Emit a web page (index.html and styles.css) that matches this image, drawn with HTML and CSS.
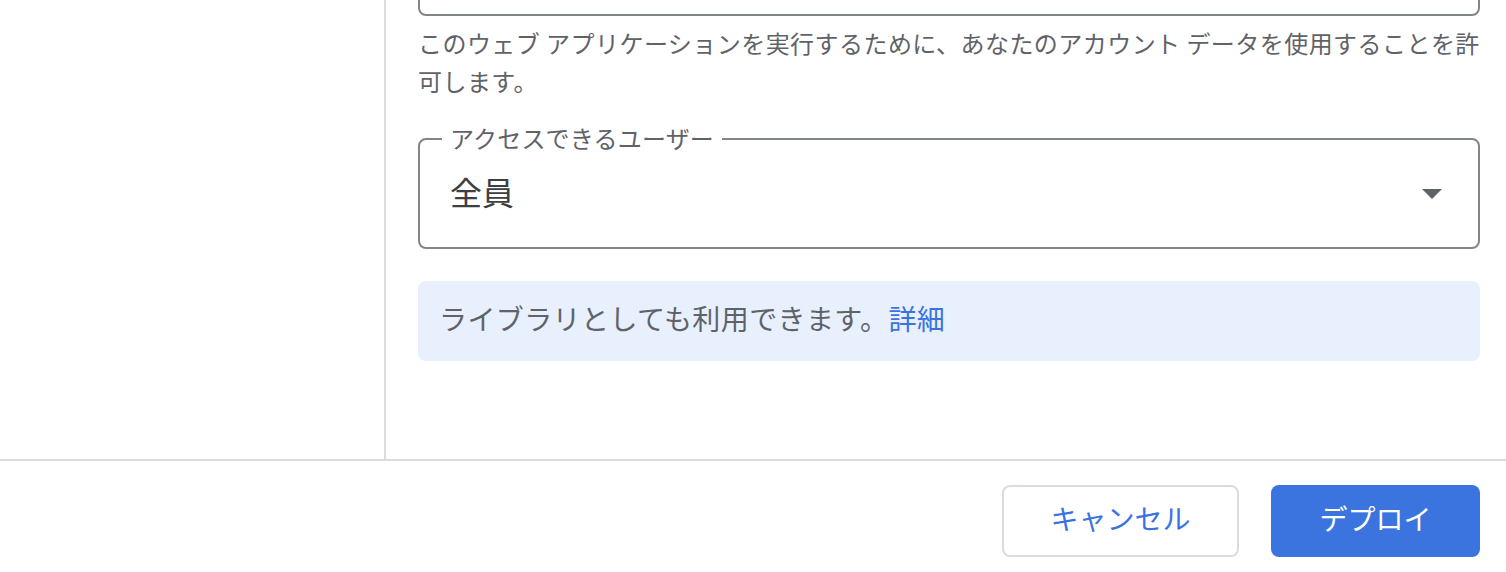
FILE: index.html
```html
<!DOCTYPE html>
<html lang="ja">
<head>
<meta charset="utf-8">
<title>デプロイ</title>
<link rel="stylesheet" href="styles.css">
</head>
<body>
<div class="dialog">
  <div class="main">
    <aside class="sidebar"></aside>
    <section class="content">
      <div class="field-top"></div>
      <p class="helper">このウェブ アプリケーションを実行するために、あなたのアカウント データを使用することを許可します。</p>
      <div class="select">
        <span class="select-label">アクセスできるユーザー</span>
        <span class="select-value">全員</span>
        <span class="select-arrow"></span>
      </div>
      <div class="info">ライブラリとしても利用できます。<a class="info-link" href="#">詳細</a></div>
    </section>
  </div>
  <footer class="footer">
    <button class="btn btn-cancel" type="button">キャンセル</button>
    <button class="btn btn-deploy" type="button">デプロイ</button>
  </footer>
</div>
</body>
</html>
```

FILE: styles.css
```css
* { box-sizing: border-box; }
html, body {
  margin: 0;
  padding: 0;
  background: #ffffff;
  font-family: "Noto Sans CJK JP", "Noto Sans", sans-serif;
}
.dialog {
  width: 1506px;
  height: 572px;
  display: flex;
  flex-direction: column;
  overflow: hidden;
}
.main {
  display: flex;
  height: 461px;
  border-bottom: 2px solid #dadce0;
}
.sidebar {
  width: 386px;
  flex: none;
  border-right: 2px solid #dadce0;
}
.content {
  flex: 1;
  padding: 0 26px 0 32px;
  overflow: hidden;
}
.field-top {
  height: 56px;
  margin-top: -40px;
  border: 2px solid #80868b;
  border-radius: 8px;
}
.helper {
  margin: 8px 0 0 0;
  font-size: 24px;
  line-height: 38px;
  color: #5f6368;
  letter-spacing: 0.45px;
}
.select {
  position: relative;
  margin-top: 38px;
  height: 111px;
  border: 2px solid #80868b;
  border-radius: 8px;
  display: flex;
  align-items: center;
  padding: 0 36px 0 30px;
}
.select-label {
  position: absolute;
  left: 22px;
  top: -18px;
  padding: 0 8px;
  background: #ffffff;
  font-size: 24px;
  line-height: 32px;
  color: #5f6368;
  letter-spacing: 0.2px;
}
.select-value {
  flex: 1;
  font-size: 32px;
  line-height: 40px;
  color: #3c4043;
  margin-top: -6px;
}
.select-arrow {
  width: 0;
  height: 0;
  border-left: 10px solid transparent;
  border-right: 10px solid transparent;
  border-top: 10px solid #5f6368;
}
.info {
  margin-top: 32px;
  height: 80px;
  border-radius: 8px;
  background: #e8f0fe;
  display: flex;
  align-items: center;
  padding: 0 0 6px 21px;
  font-size: 28px;
  color: #5f6368;
  letter-spacing: 0.4px;
}
.info-link {
  color: #3a73e0;
  text-decoration: none;
}
.footer {
  flex: 1;
  display: flex;
  justify-content: flex-end;
  align-items: flex-start;
  gap: 32px;
  padding: 24px 26px 0 0;
}
.btn {
  height: 72px;
  padding: 0 0 6px 0;
  border-radius: 8px;
  font-family: "Noto Sans CJK JP", "Noto Sans", sans-serif;
  font-size: 28px;
  cursor: pointer;
}
.btn-cancel {
  width: 237px;
  background: #ffffff;
  border: 2px solid #dadce0;
  color: #3a73e0;
}
.btn-deploy {
  width: 209px;
  background: #3b74df;
  border: none;
  color: #ffffff;
}
```
